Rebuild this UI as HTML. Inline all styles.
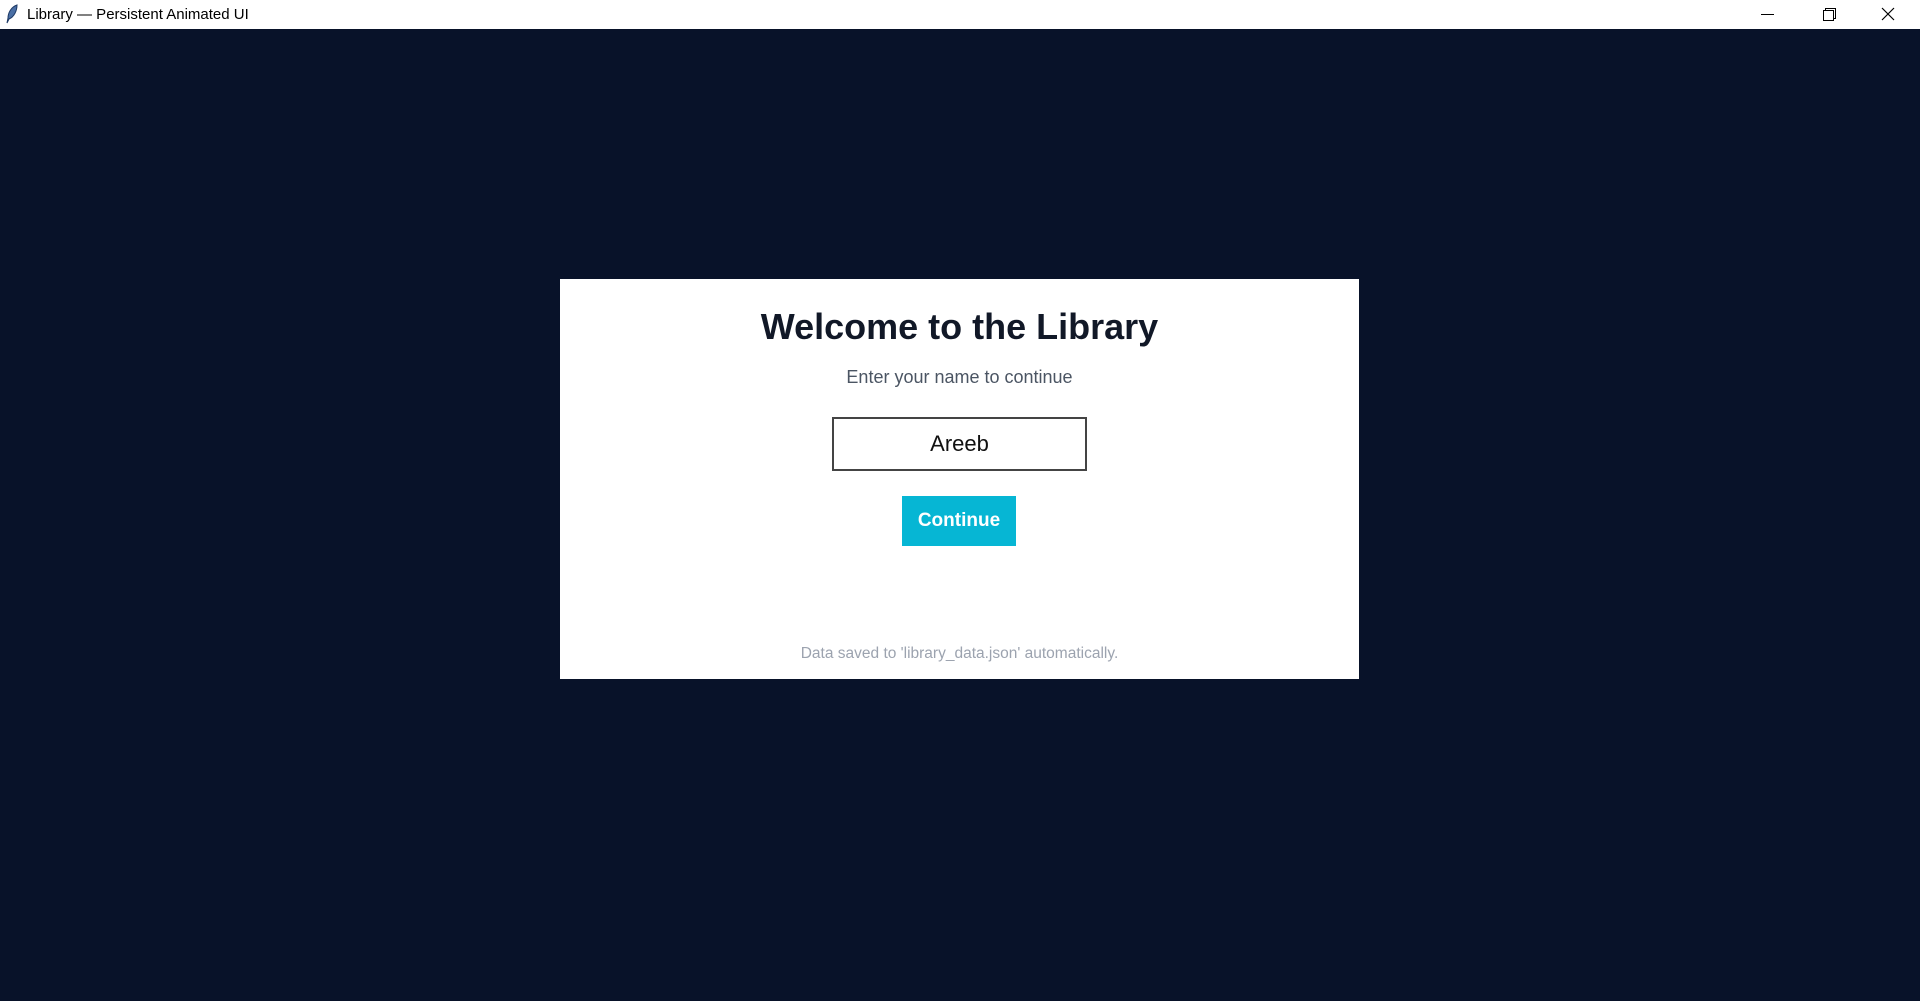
<!DOCTYPE html>
<html><head><meta charset="utf-8"><style>
html,body{margin:0;padding:0;width:1920px;height:1001px;overflow:hidden;background:#081229;font-family:"Liberation Sans",Arial,sans-serif}
.tb{position:absolute;left:0;top:0;width:1920px;height:29px;background:#fff}
.tt{position:absolute;left:27px;top:6px;font-size:15px;color:#000;font-family:"Liberation Sans",sans-serif}
.card{position:absolute;left:560px;top:279px;width:799px;height:400px;background:#fff}
.h{position:absolute;left:0;width:100%;text-align:center}
.inp{position:absolute;left:272px;top:138px;width:251px;height:50px;border:2px solid #444;box-sizing:content-box}
.btn{position:absolute;left:342px;top:217px;width:114px;height:50px;background:#06b6d4;color:#fff;font-weight:bold;font-size:19px;text-align:center;line-height:50px}
</style></head><body>
<div class="tb">
<svg style="position:absolute;left:5px;top:4px" width="14" height="20" viewBox="0 0 14 20"><path d="M12 1C6 3 3 9 3 14L2 19L4 15C9 13 12 7 12 1Z" fill="#4a6fa5" stroke="#1e3a66" stroke-width="1"/></svg>
<div class="tt">Library — Persistent Animated UI</div>
<svg style="position:absolute;left:1760px;top:7px" width="15" height="15"><line x1="1" y1="7.5" x2="14" y2="7.5" stroke="#000" stroke-width="1"/></svg>
<svg style="position:absolute;left:1822px;top:7px" width="15" height="15"><rect x="1.5" y="3.5" width="10" height="10" fill="none" stroke="#000"/><path d="M3.5 3.5V1.5H13.5V11.5H11.5" fill="none" stroke="#000"/></svg>
<svg style="position:absolute;left:1880px;top:6px" width="16" height="16"><path d="M2 2L14 14M14 2L2 14" stroke="#000" stroke-width="1.2"/></svg>
</div>
<div class="card">
<div class="h" style="top:27px;font-size:36px;font-weight:bold;color:#111827">Welcome to the Library</div>
<div class="h" style="top:88px;font-size:18px;color:#4b5563">Enter your name to continue</div>
<div class="inp"></div>
<div class="h" style="top:152px;font-size:22px;color:#111">Areeb</div>
<div class="btn">Continue</div>
<div class="h" style="top:366px;font-size:15.5px;color:#9ca3af">Data saved to 'library_data.json' automatically.</div>
</div>
</body></html>
